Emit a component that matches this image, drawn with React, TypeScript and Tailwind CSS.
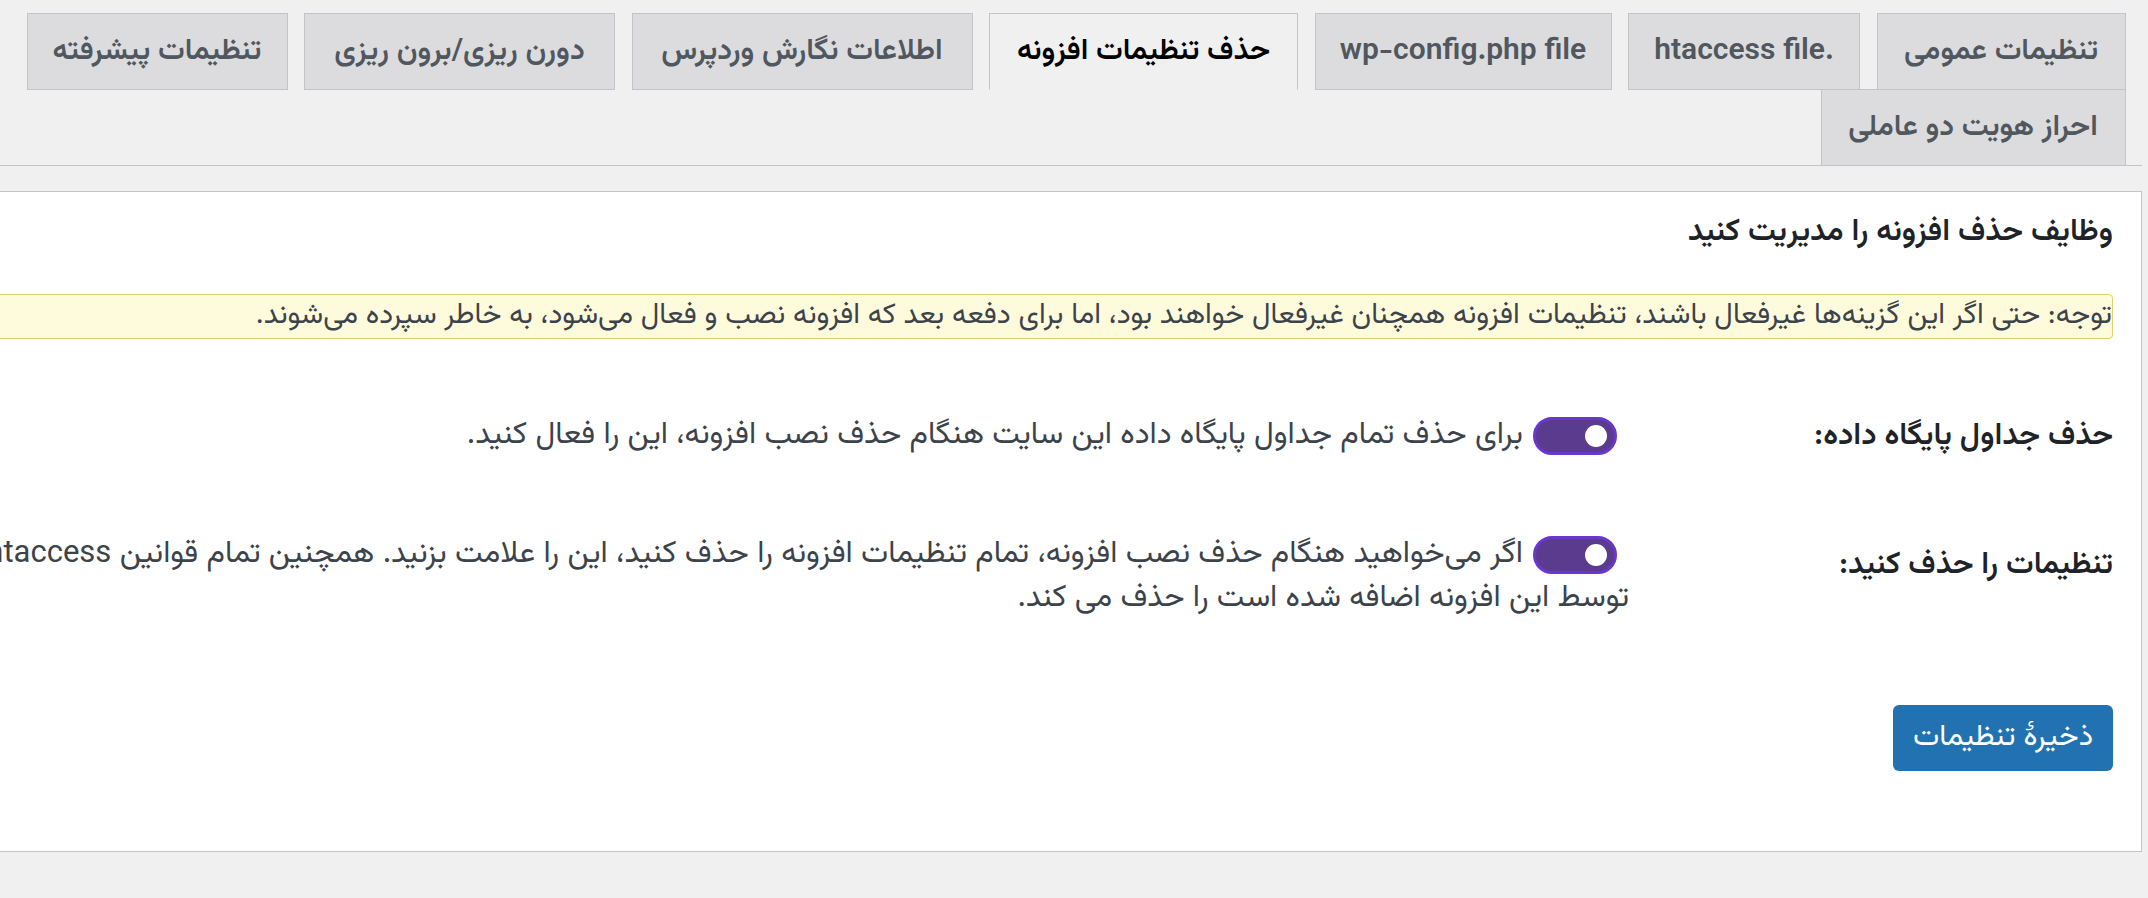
const tabs = [
  { label: 'تنظیمات عمومی', w: 'w-[249px]' },
  { label: '.htaccess file', w: 'w-[232px]' },
  { label: 'wp-config.php file', w: 'w-[297px]' },
  { label: 'حذف تنظیمات افزونه', w: 'w-[309px]', active: true },
  { label: 'اطلاعات نگارش وردپرس', w: 'w-[341px]' },
  { label: 'دورن ریزی/برون ریزی', w: 'w-[311px]' },
  { label: 'تنظیمات پیشرفته', w: 'w-[261px]' },
  { label: 'احراز هویت دو عاملی', w: 'w-[305px]' },
]

function Toggle() {
  return (
    <span
      dir="ltr"
      className="inline-flex items-center justify-end align-top mt-[3px] mr-[12px] ml-[10px] w-[84px] h-[38px] rounded-full border-[3px] border-[#6a37cc] bg-[#5b3b8d] px-[7px]"
    >
      <span className="block w-[22px] h-[22px] rounded-full bg-white" />
    </span>
  )
}

export default function App() {
  return (
    <div
      dir="rtl"
      className="w-[2148px] h-[898px] overflow-hidden bg-[#f0f0f1] pt-[13px] font-['Vazirmatn','Roboto','Noto_Sans_Arabic','DejaVu_Sans',sans-serif]"
    >
      <div className="w-[2142px] mr-[6px]">
        {/* Tabs */}
        <nav className="flex flex-wrap border-b border-[#c3c4c7]">
          {tabs.map((t) => (
            <a
              key={t.label}
              className={`${t.w} h-[77px] -mb-px mr-[16.5px] flex items-center justify-center border border-[#c3c4c7] text-[30px] font-semibold leading-none ${
                t.active
                  ? 'bg-[#f0f0f1] border-b-[#f0f0f1] text-black'
                  : 'bg-[#dcdcde] text-[#50575e]'
              }`}
            >
              {t.label}
            </a>
          ))}
        </nav>

        {/* Settings card */}
        <div className="w-[3000px] mt-[25px] bg-white border border-[#c3c4c7] pr-[28px] pt-[20px] pb-[80px]">
          <h2 className="text-[31px] leading-[42px] font-semibold text-[#1d2327]">
            وظایف حذف افزونه را مدیریت کنید
          </h2>

          <div className="mt-[40px] border border-[#ddd26a] bg-[#fefbdc] rounded-[4px] py-[5px] text-[29px] leading-[33px] text-[#3c434a]">
            توجه: حتی اگر این گزینه‌ها غیرفعال باشند، تنظیمات افزونه همچنان غیرفعال خواهند بود، اما برای دفعه بعد که افزونه نصب و فعال می‌شود، به خاطر سپرده می‌شوند.
          </div>

          <div className="mt-[75px] flex">
            <div className="w-[484px] shrink-0 pt-[1px] text-[31px] leading-[44px] font-semibold text-[#1d2327]">
              حذف جداول پایگاه داده:
            </div>
            <div className="text-[31px] leading-[44px] text-[#3c434a]">
              <Toggle />
              برای حذف تمام جداول پایگاه داده این سایت هنگام حذف نصب افزونه، این را فعال کنید.
            </div>
          </div>

          <div className="mt-[74px] flex">
            <div className="w-[484px] shrink-0 pt-[11px] text-[31px] leading-[44px] font-semibold text-[#1d2327]">
              تنظیمات را حذف کنید:
            </div>
            <div className="text-[31px] leading-[44px] text-[#3c434a]">
              <span className="whitespace-nowrap">
                <Toggle />
                اگر می‌خواهید هنگام حذف نصب افزونه، تمام تنظیمات افزونه را حذف کنید، این را علامت بزنید. همچنین تمام قوانین htaccess که
              </span>
              <br />
              توسط این افزونه اضافه شده است را حذف می کند.
            </div>
          </div>

          <button className="mt-[84px] w-[220px] h-[66px] rounded-[6px] bg-[#2271b1] text-white text-[30px] leading-none">
            ذخیرهٔ تنظیمات
          </button>
        </div>
      </div>
    </div>
  )
}
